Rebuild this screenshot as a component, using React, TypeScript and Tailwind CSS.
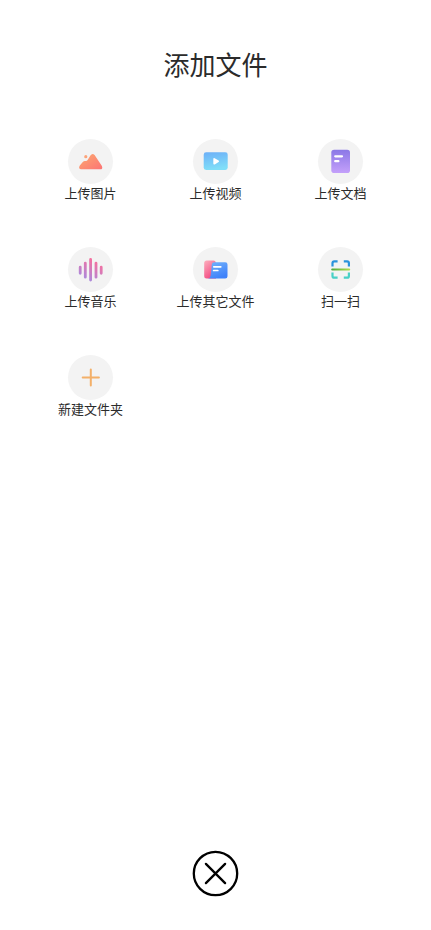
import { ReactNode } from "react"

const ImageIcon = () => (
    <svg viewBox="0 0 45 45" className="size-full" aria-hidden="true">
        <defs>
            <linearGradient id="image-fill" x1="0" y1="0" x2="1" y2="1">
                <stop offset="0" stopColor="#fcab70" />
                <stop offset="1" stopColor="#fc7474" />
            </linearGradient>
        </defs>
        <circle cx="17.8" cy="17.7" r="1.6" fill="#fca47a" />
        <path
            d="M11.8 26.4L14.8 22.9Q16 21.6 17.6 22Q19 22.1 19.8 20.8L22.4 16.6Q24.3 13.6 26.6 16L33.9 26.9Q35.2 30.2 32.2 30.3H13.2Q9.9 29.6 11.8 26.4Z"
            fill="url(#image-fill)"
        />
    </svg>
)

const VideoIcon = () => (
    <svg viewBox="0 0 45 45" className="size-full" aria-hidden="true">
        <defs>
            <linearGradient id="video-fill" x1="0" y1="0" x2="0.2" y2="1">
                <stop offset="0" stopColor="#6cb0f8" />
                <stop offset="1" stopColor="#80def8" />
            </linearGradient>
        </defs>
        <rect x="10.7" y="13.3" width="24" height="17.7" rx="2.4" fill="url(#video-fill)" />
        <path d="M20.3 20Q20.4 18.6 21.7 19.2L25.6 21.5Q26.6 22.3 25.6 23.1L21.7 25.4Q20.4 26 20.3 24.6Z" fill="#fff" />
    </svg>
)

const DocIcon = () => (
    <svg viewBox="0 0 45 45" className="size-full" aria-hidden="true">
        <defs>
            <linearGradient id="doc-fill" x1="0" y1="0" x2="0" y2="1">
                <stop offset="0" stopColor="#8b78e6" />
                <stop offset="1" stopColor="#c4a0fa" />
            </linearGradient>
        </defs>
        <rect x="13.3" y="10.8" width="18.7" height="23.2" rx="2.8" fill="url(#doc-fill)" />
        <path d="M17.2 17.3H24M17.2 22.2H20.4" stroke="#fff" strokeWidth="2.2" strokeLinecap="round" />
    </svg>
)

const MusicIcon = () => (
    <svg viewBox="0 0 45 45" className="size-full" aria-hidden="true">
        <defs>
            <linearGradient id="music-fill" gradientUnits="userSpaceOnUse" x1="27" y1="14" x2="17" y2="33">
                <stop offset="0" stopColor="#f4709f" />
                <stop offset="1" stopColor="#a78be0" />
            </linearGradient>
        </defs>
        <path
            d="M12.2 20.2V26.3M17.3 16.2V30.2M22.6 12.4V33M28 16.2V30.2M33.2 20.2V26.3"
            stroke="url(#music-fill)"
            strokeWidth="2.8"
            strokeLinecap="round"
            fill="none"
        />
    </svg>
)

const FolderIcon = () => (
    <svg viewBox="0 0 45 45" className="size-full" aria-hidden="true">
        <defs>
            <linearGradient id="folder-back" x1="0" y1="0" x2="0.6" y2="1">
                <stop offset="0" stopColor="#fdb0be" />
                <stop offset="1" stopColor="#f2457f" />
            </linearGradient>
            <linearGradient id="folder-front" x1="0" y1="0" x2="0.5" y2="1">
                <stop offset="0" stopColor="#74b4fb" />
                <stop offset="1" stopColor="#3f82fa" />
            </linearGradient>
        </defs>
        <path d="M11.2 16Q11.2 13.5 13.7 13.5H20.6Q22.4 13.5 22.8 15.5L23 31.6H13.7Q11.2 31.6 11.2 29.1Z" fill="url(#folder-back)" />
        <path
            d="M18.8 17.5Q19 15.2 21.2 15.2H32.2Q34.5 15.2 34.5 17.5V29.3Q34.5 31.6 32.2 31.6H14.6Q17.4 31.2 17.7 28.5Z"
            fill="url(#folder-front)"
        />
        <path d="M20.8 19.8H27.8M20.6 23.5H24.8" stroke="#fff" strokeWidth="1.7" strokeLinecap="round" />
    </svg>
)

const ScanIcon = () => (
    <svg viewBox="0 0 45 45" className="size-full" aria-hidden="true">
        <defs>
            <linearGradient id="scan-line" gradientUnits="userSpaceOnUse" x1="13" y1="0" x2="32" y2="0">
                <stop offset="0" stopColor="#4ba83c" />
                <stop offset="1" stopColor="#b2dc4c" />
            </linearGradient>
        </defs>
        <g fill="none" strokeWidth="2.2">
            <path d="M14.5 19.4V16.1Q14.5 14.3 16.3 14.3H19.6M25.8 14.3H29.1Q30.9 14.3 30.9 16.1V19.4" stroke="#2b93dc" />
            <path d="M14.5 25.6V28.9Q14.5 30.7 16.3 30.7H19.6M25.8 30.7H29.1Q30.9 30.7 30.9 28.9V25.6" stroke="#48d0c6" />
        </g>
        <rect x="13.2" y="21.5" width="19" height="2" rx="1" fill="url(#scan-line)" />
    </svg>
)

const PlusIcon = () => (
    <svg viewBox="0 0 45 45" className="size-full" aria-hidden="true">
        <path d="M22.8 14.4V30.6M14.7 22.5H30.9" stroke="#f3b069" strokeWidth="2" strokeLinecap="round" />
    </svg>
)

const actions: { label: string, icon: ReactNode }[] = [
    { label: "上传图片", icon: <ImageIcon /> },
    { label: "上传视频", icon: <VideoIcon /> },
    { label: "上传文档", icon: <DocIcon /> },
    { label: "上传音乐", icon: <MusicIcon /> },
    { label: "上传其它文件", icon: <FolderIcon /> },
    { label: "扫一扫", icon: <ScanIcon /> },
    { label: "新建文件夹", icon: <PlusIcon /> },
]

const App = () => {
    return (
        <main className="flex min-h-screen flex-col items-center bg-white px-7 pt-[46px] pb-[33px] font-['Noto_Sans_CJK_SC',sans-serif] text-[#2b2b2b]">
            <h1 className="text-[26px] leading-9">添加文件</h1>
            <div className="mt-[57px] grid w-full grid-cols-3 gap-y-[45px]">
                {actions.map(({ label, icon }) => (
                    <button key={label} type="button" className="flex cursor-pointer flex-col items-center">
                        <span className="size-[45px] rounded-full bg-[#f3f3f3]">{icon}</span>
                        <span className="text-[13px] leading-[18px]">{label}</span>
                    </button>
                ))}
            </div>
            <button type="button" aria-label="关闭" className="mt-auto size-[47px] cursor-pointer">
                <svg viewBox="0 0 47 47" className="size-full" fill="none" stroke="#000" strokeWidth="2.3" strokeLinecap="round">
                    <circle cx="23.5" cy="23.5" r="21.7" />
                    <path d="M13.9 13.9L33.1 33.1M33.1 13.9L13.9 33.1" />
                </svg>
            </button>
        </main>
    )
}

export default App
